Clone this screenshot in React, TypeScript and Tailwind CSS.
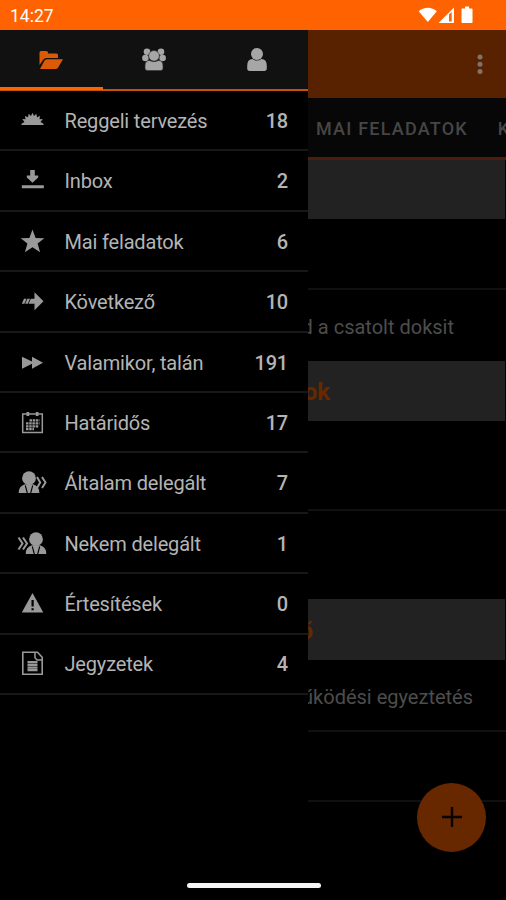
import type { ReactNode } from 'react'

interface MenuItem {
  label: string
  count: number
  icon: ReactNode
}

const personBust = (
  <>
    <path d="M5.700 25q0-7 6.300-8.700h8q6.300 1.700 6.300 8.700z" />
    <path d="M12.300 17.500 14.300 25M19.700 17.500 17.700 25" fill="none" stroke="#000" strokeWidth="1.100" />
    <circle cx="16" cy="10.200" r="6.900" />
  </>
)

const MENU_ITEMS: MenuItem[] = [
  {
    label: 'Reggeli tervezés',
    count: 18,
    icon: (
      <path d="M5.500 18.700 8.500 17l-2.300-3 3.300.2-.5-3.200 3 1.200.7-3.500 2.300 2.200L16.500 7.800 18 10.900l2.300-2.200.7 3.500 3-1.200-.5 3.200 3.300-.2-2.300 3 3 1.700v1.300h-22z" />
    ),
  },
  {
    label: 'Inbox',
    count: 2,
    icon: <path d="M14.200 5h4.600v5.500h3.400v2L16.500 17.700l-5.700-5.200v-2h3.400zM5.800 20.300h22v2.900h-22z" />,
  },
  {
    label: 'Mai feladatok',
    count: 6,
    icon: (
      <path d="m16.500 3.500 3.100 8.400 8.700.3-6.700 5.400 2.500 8.700-7.600-5-7.600 5 2.500-8.700-6.700-5.400 8.700-.3z" />
    ),
  },
  {
    label: 'Következő',
    count: 10,
    icon: (
      <path d="M8 12.700h2.600L8.400 17.800H5.800zM11.400 12.700H14l-2.200 5.100H9.200zM14.800 12.700h3.700V6.200l9 9-9 9v-6.400h-5.900z" />
    ),
  },
  {
    label: 'Valamikor, talán',
    count: 191,
    icon: <path d="M6 9.700l10 4.700V9.700l11 6-11 6v-5l-10 5z" />,
  },
  {
    label: 'Határidős',
    count: 17,
    icon: (
      <>
        <path d="M6.700 7h19.600v18.500H6.700z" fill="none" stroke="currentColor" strokeWidth="1.500" />
        <path d="M10.500 5h2.700v4h-2.700zM19.800 5h2.700v4h-2.700z" />
        <path
          d="M13.500 13.300h10M10 16.300h13.500M10 19.300h13M10 22.200h8"
          fill="none"
          stroke="currentColor"
          strokeWidth="2.200"
          strokeDasharray="2.500 .7"
        />
      </>
    ),
  },
  {
    label: 'Általam delegált',
    count: 7,
    icon: (
      <>
        <g transform="translate(-3 1)">{personBust}</g>
        <path d="m21 10 3.200 5.500L21 21M26 10l3.500 5.500L26 21" fill="none" stroke="currentColor" strokeWidth="2" />
      </>
    ),
  },
  {
    label: 'Nekem delegált',
    count: 1,
    icon: (
      <>
        <g transform="translate(4 1)">{personBust}</g>
        <path d="m2.500 9.500 4 6-4 6M7 9.500l4 6-4 6" fill="none" stroke="currentColor" strokeWidth="2" />
      </>
    ),
  },
  {
    label: 'Értesítések',
    count: 0,
    icon: (
      <>
        <path d="M16.500 5 27.300 24.500H5.800z" />
        <path d="M15.500 12h2.200v6.500h-2.200zM15.500 20.300h2.200v2h-2.200z" fill="#000" />
      </>
    ),
  },
  {
    label: 'Jegyzetek',
    count: 4,
    icon: (
      <>
        <path d="M6.800 4.300h14.700l4.700 5v16.900H6.800z" fill="none" stroke="currentColor" strokeWidth="1.600" />
        <path d="M19 4.500v5.200l2 2.300h5" fill="none" stroke="currentColor" strokeWidth="1.500" />
        <path d="M11.500 14.200H21.500M11.500 16.900H21.500M11.500 19.600H21.500M11.500 22.200H21.500" stroke="currentColor" strokeWidth="2.200" />
      </>
    ),
  },
]

function StatusBar() {
  return (
    <header className="flex h-[30px] items-center justify-between bg-[#ff6200] pl-[10px] pr-[32px] pt-[2px] text-white">
      <span className="text-[17.500px]">14:27</span>
      <svg width="56" height="20" viewBox="0 0 56 20" fill="currentColor">
        <path d="M.7 5.200C5.500.5 14 .5 18.800 5.200L9.800 16z" />
        <path d="M36 1.500V17H20.500z" />
        <path d="M31 8.500 33.700 6v9.500H31z" fill="#ff6200" />
        <path d="M47 .5h4v2h2.700q.8 0 .8.800v12.900q0 .8-.8.800h-9.400q-.8 0-.8-.8V3.300q0-.8.8-.8H47z" />
      </svg>
    </header>
  )
}

function DrawerTabs() {
  return (
    <nav className="relative grid h-[61px] grid-cols-3 border-b-2 border-[#c95107] bg-[#111] text-[#a6a6a6]">
      <button type="button" className="flex items-center justify-center text-[#dc5905]" aria-label="Mappák">
        <svg width="28" height="28" viewBox="0 0 28 28" fill="currentColor">
          <path d="M2.500 6.500q0-1.500 1.500-1.500h5.500q1.500 0 1.800 2.500h8.200q1.500 0 1.500 1.500v3H9.500q-2 0-3.300 1.800L2.500 19z" />
          <path d="M9.800 13.200H26L21 21.700q-.8 1.300-2.500 1.300H3l4.200-8q1-1.800 2.600-1.800z" />
        </svg>
      </button>
      <button type="button" className="flex items-center justify-center" aria-label="Csoportok">
        <svg width="28" height="28" viewBox="0 0 28 28" fill="currentColor">
          <circle cx="7" cy="5.700" r="3.300" />
          <circle cx="21" cy="5.700" r="3.300" />
          <circle cx="5.400" cy="12" r="3.300" />
          <circle cx="22.600" cy="12" r="3.300" />
          <circle cx="14" cy="9.800" r="5.300" stroke="#333" strokeWidth=".6" />
          <path d="M5 20q0-5.500 4.500-5.500 4.500 2.500 9 0 4.500 0 4.500 5.500v2q0 2.500-2.500 2.500h-13q-2.500 0-2.500-2.500z" stroke="#333" strokeWidth=".6" />
        </svg>
      </button>
      <button type="button" className="flex items-center justify-center" aria-label="Profil">
        <svg width="28" height="28" viewBox="0 0 28 28" fill="currentColor">
          <circle cx="14" cy="8" r="6" />
          <path d="M4.200 20q0-7 5.300-7 4.500 3.200 9 0 5.300 0 5.300 7v2.300q0 2.700-2.500 2.700H6.700q-2.500 0-2.500-2.700z" />
        </svg>
      </button>
      <span className="absolute bottom-[-1px] left-0 h-[3px] w-[103px] bg-[#ff6200]" />
    </nav>
  )
}

function Drawer() {
  return (
    <aside className="w-[308px] shrink-0 bg-black">
      <DrawerTabs />
      <ul>
        {MENU_ITEMS.map((item) => (
          <li
            key={item.label}
            className="flex h-[60.400px] items-center border-b-2 border-[#181818] pl-4 pr-5 pt-[1.500px] text-[20px] text-[#b4b4b4]"
          >
            <svg width="32" height="32" viewBox="0 0 32 32" fill="currentColor" className="shrink-0 text-[#999]">
              {item.icon}
            </svg>
            <span className="ml-[16.500px] flex-1 whitespace-nowrap tracking-[-0.170px]">{item.label}</span>
            <span className="font-medium tracking-[-0.200px]">{item.count}</span>
          </li>
        ))}
      </ul>
    </aside>
  )
}

function TaskScreen() {
  return (
    <main className="flex min-w-0 flex-1 flex-col overflow-hidden whitespace-nowrap bg-black text-[20px] text-[#4d4d4d]">
      <div className="flex h-[68px] shrink-0 items-center justify-end bg-[#582200] pr-[23px]">
        <svg width="6" height="22" viewBox="0 0 6 22" fill="#7e7469">
          <circle cx="3" cy="4" r="2.500" />
          <circle cx="3" cy="11.300" r="2.500" />
          <circle cx="3" cy="18.500" r="2.500" />
        </svg>
      </div>
      <div className="flex h-[62px] shrink-0 items-center gap-[30px] border-b-[3px] border-[#4e1e0d] bg-[#070707] pl-2 pt-[2px] text-[18px] font-medium tracking-[1.200px] text-[#464646]">
        <span>MAI FELADATOK</span>
        <span>K</span>
      </div>
      <div className="mr-[1px] h-[59px] shrink-0 bg-[#222]" />
      <div className="h-[71px] shrink-0 border-b-2 border-[#101010]" />
      <div className="flex h-[71px] shrink-0 items-center justify-end pr-[52px] pt-[3px]">
        <span>d a csatolt doksit</span>
      </div>
      <div className="mr-[1px] flex h-[60px] shrink-0 items-center justify-end bg-[#222] pr-[175px] pt-[2px] text-[24px] font-bold text-[#672800]">
        <span>ok</span>
      </div>
      <div className="h-[90px] shrink-0 border-b-2 border-[#101010]" />
      <div className="h-[88px] shrink-0" />
      <div className="mr-[1px] flex h-[61px] shrink-0 items-center justify-end bg-[#222] pr-[192px] pt-[2px] text-[24px] font-bold text-[#672800]">
        <span>ő</span>
      </div>
      <div className="flex h-[72px] shrink-0 items-center justify-end border-b-2 border-[#101010] pr-[33px] pt-[3px]">
        <span>űködési egyeztetés</span>
      </div>
      <div className="h-[70px] shrink-0 border-b-2 border-[#101010]" />
    </main>
  )
}

export default function App() {
  return (
    <div className="relative flex h-[900px] w-[506px] flex-col overflow-hidden bg-black font-['Roboto',sans-serif]">
      <StatusBar />
      <div className="flex min-h-0 flex-1">
        <Drawer />
        <TaskScreen />
      </div>
      <button
        type="button"
        aria-label="Új feladat"
        className="absolute bottom-[48.500px] right-[20px] flex h-[69px] w-[69px] items-center justify-center rounded-full bg-[#672800]"
      >
        <svg width="20" height="20" viewBox="0 0 20 20" stroke="#0b0300" strokeWidth="2.400">
          <path d="M10 0v20M0 10h20" />
        </svg>
      </button>
      <div className="absolute bottom-[12px] left-[187px] h-[5px] w-[134px] rounded-full bg-[#f4f4f4]" />
    </div>
  )
}
